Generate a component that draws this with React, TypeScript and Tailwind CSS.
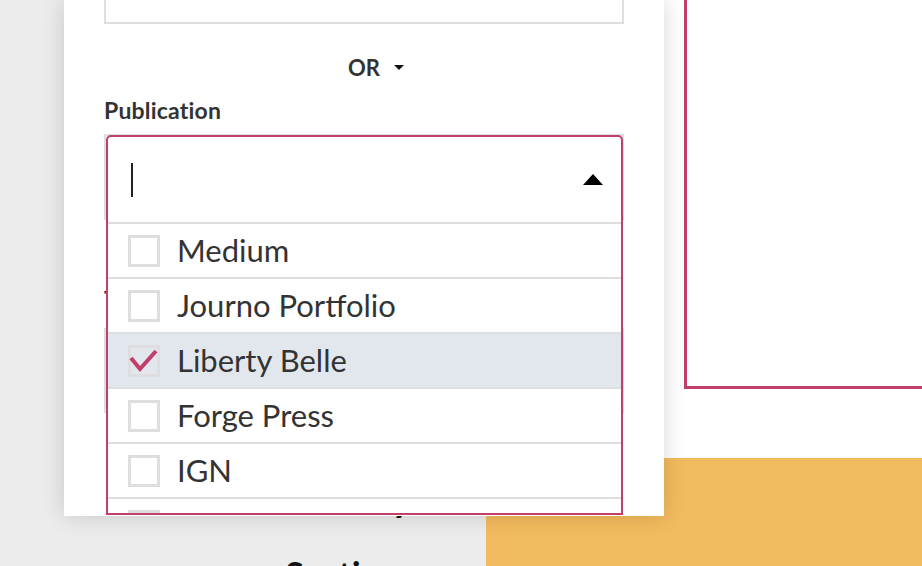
const publications = [
  { name: "Medium", checked: false },
  { name: "Journo Portfolio", checked: false },
  { name: "Liberty Belle", checked: true },
  { name: "Forge Press", checked: false },
  { name: "IGN", checked: false },
  { name: "Vice", checked: false },
];

function Checkbox({ checked }: { checked: boolean }) {
  return (
    <div className="relative w-[32px] h-[32px] shrink-0 border-[3px] border-[#dedede]">
      {checked && (
        <svg viewBox="0 0 32 32" className="absolute -left-[3px] -top-[3px] w-[32px] h-[32px] overflow-visible">
          <polyline points="3,13 12,24 28,6" fill="none" stroke="#c23d69" strokeWidth="4" />
        </svg>
      )}
    </div>
  );
}

export default function App() {
  return (
    <div className="relative w-[922px] h-[566px] overflow-hidden font-['Lato',sans-serif] text-[#333]">
      {/* PAGE BEHIND */}
      <div className="flex h-full">
        <div className="w-[486px] bg-[#ececec] pt-[474px] pr-[72px] text-right">
          <div className="text-[40px] leading-[44px] italic font-bold text-[#111]">Community</div>
          <div className="mt-[36px] text-[34px] leading-[40px] font-bold text-[#111]">Sections</div>
        </div>
        <div className="flex-1 flex flex-col">
          <div className="h-[458px] bg-white pl-[198px]">
            <div className="h-[389px] border-l-[3px] border-b-[3px] border-[#c23f6b]" />
          </div>
          <div className="flex-1 bg-[#f3bb5f]" />
        </div>
      </div>

      {/* MODAL */}
      <div className="absolute left-[64px] top-0 w-[600px] h-[516px] bg-white shadow-[0_0_22px_rgba(0,0,0,0.16)] overflow-hidden">
        <div className="px-[40px]">
          <div className="-mt-[40px] h-[64px] border-2 border-[#dedede]" />

          <div className="flex items-center justify-center gap-[14px] mt-[31px] h-[24px] pl-[24px] text-[22px] font-bold text-[#333]">
            OR
            <svg viewBox="0 0 10 5" className="w-[10px] h-[5px]">
              <polygon points="0,0 10,0 5,5" fill="#111" />
            </svg>
          </div>

          <div className="mt-[18px] text-[23px] leading-[26px] font-bold tracking-[0.2px]">Publication</div>

          {/* select + underlying fields */}
          <div className="relative mt-[11px]">
            <div className="h-[86px] border-2 border-[#dedede]" />
            <div className="mt-[66px] text-[23px] leading-[26px] font-bold">Title</div>
            <div className="mt-[16px] h-[85px] border-2 border-[#dedede]" />

            <div className="absolute left-[2px] right-[1px] top-[1px] h-[380px] bg-white border-2 border-[#c23f6b] rounded-t-[5px] overflow-hidden">
              <div className="h-[85px] flex items-center justify-between pl-[23px] pr-[18px]">
                <div className="w-[2px] h-[34px] bg-[#222]" />
                <svg viewBox="0 0 20 11" className="w-[20px] h-[11px]">
                  <polygon points="0,11 20,11 10,0" fill="#000" />
                </svg>
              </div>
              {publications.map((p) => (
                <div
                  key={p.name}
                  className={`h-[55px] flex items-center gap-[17px] pl-[20px] border-t-2 border-[#dedede] ${
                    p.checked ? "bg-[#e2e7ee]" : "bg-white"
                  }`}
                >
                  <Checkbox checked={p.checked} />
                  <span className="text-[31px] leading-none">{p.name}</span>
                </div>
              ))}
            </div>
          </div>
        </div>
      </div>
    </div>
  );
}
